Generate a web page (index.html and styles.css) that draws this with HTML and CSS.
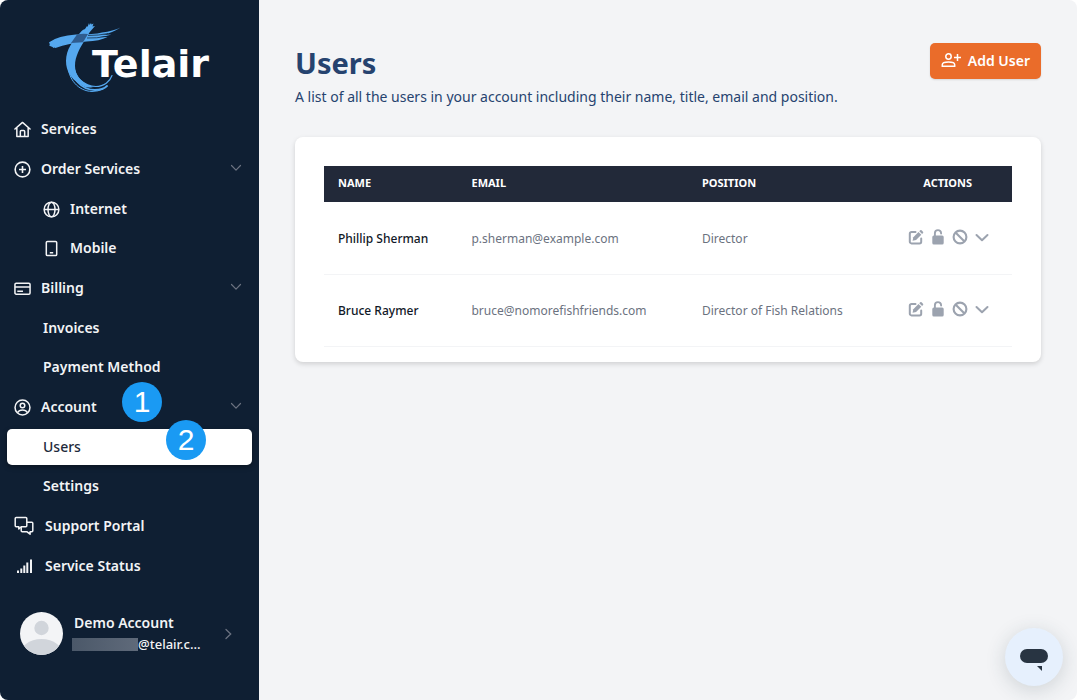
FILE: index.html
```html
<!DOCTYPE html>
<html lang="en">
<head>
<meta charset="utf-8">
<meta name="viewport" content="width=device-width, initial-scale=1">
<title>Users - Telair</title>
<link rel="stylesheet" href="styles.css">
</head>
<body>
<svg class="sprite" aria-hidden="true">
  <symbol id="i-down" viewBox="0 0 12 12"><path d="M1.500 2.500 6 7.200l4.500-4.700" fill="none" stroke="currentColor" stroke-width="1.200" stroke-linecap="round" stroke-linejoin="round"/></symbol>
  <symbol id="i-edit" viewBox="0 0 16 16"><path d="M7.500 3H3.500A1.700 1.700 0 0 0 1.800 4.700v8A1.700 1.700 0 0 0 3.500 14.400h8a1.700 1.700 0 0 0 1.700-1.700V9.500" fill="none" stroke="currentColor" stroke-width="2" stroke-linecap="round"/><path d="M5.300 8.200 10.500 3 13.300 5.800 8.100 11l-3.500.8z" fill="currentColor"/><path d="m11.300 2.200.9-.9q.7-.6 1.400 0l1.400 1.400q.6.700 0 1.400l-.9.900z" fill="currentColor"/></symbol>
  <symbol id="i-lock" viewBox="0 0 16 16"><rect x="2.300" y="6.600" width="11.400" height="8.900" rx="1.500" fill="currentColor"/><path d="M4.900 7V4.200a3.100 3.100 0 0 1 6.200 0v.3" fill="none" stroke="currentColor" stroke-width="1.900" stroke-linecap="round"/></symbol>
  <symbol id="i-ban" viewBox="0 0 16 16"><g fill="none" stroke="currentColor" stroke-width="2.100"><circle cx="8" cy="8" r="6.400"/><path d="m3.500 3.500 9 9"/></g></symbol>
  <symbol id="i-more" viewBox="0 0 16 16"><path d="m2.500 6 5.500 5.300L13.500 6" fill="none" stroke="currentColor" stroke-width="2" stroke-linecap="round" stroke-linejoin="round"/></symbol>
</svg>
<div class="app">
  <aside class="sidebar">
    <a class="logo" href="#" aria-label="Telair">
      <svg width="164" height="74" viewBox="46 20 164 74">
        <g fill="#55a8ef">
          <path d="M85 29l2-3 .5 1 1.500-4 .5 2 1.500-2 .5 1.500 2-1-1 3 2.500-.5Q90 31 86 38c-6 10-11 18-11 28 0 9 6 17 18 21q-7 2-13-3c-9-5-14-13-14-23 0-12 7-20 13-27 3-3 3-4 6-5z"/>
          <path d="M50 46l-1-1 1-.5-1-2 1-.8Q58 36 76 34.500q18 0 26-2 11-1.500 18.500-5-9 6-19 7.500l10-.5q-5 2-12 2.200l8 .2q-8 4-21 4.600-18 1.500-31 6.500l-1-.5-1 .5-1-1z"/>
        </g>
        <path d="M77 34.500q6-1.500 11-.4l-5 8.200-12 .6z" fill="#2f5c8f"/>
        <g fill="none" stroke="#55a8ef" stroke-linecap="round">
          <path d="M74 65c0 12 10 21.500 22 21.500 8 0 14-5 16-11" stroke-width="1.200"/>
          <path d="M71 64c0 14 10 26 24 26 5 0 9-1 12-4" stroke-width="1.800"/>
          <path d="M68 65c0 14 10 26 24 26.500q6 0 11-2.500" stroke-width="1"/>
        </g>
        <path d="M88 35.500q11 0 20-2M87 38q10 .3 19-1.500" fill="none" stroke="#0f1f33" stroke-width=".7"/>
        <text class="logo-text" x="92" y="77">Telair</text>
      </svg>
    </a>
    <nav class="nav" aria-label="Main">
      <ul class="menu">
        <li><a class="item" href="#">
          <svg width="17" height="17" viewBox="0 0 18 18" fill="none" stroke="currentColor" stroke-width="1.600" stroke-linejoin="round" stroke-linecap="round"><path d="M1 8.500 9 1.500l8 7M3 7v9.500h12V7M6.700 16.300v-5.300q0-1 1-1h2.600q1 0 1 1v5.300"/></svg>
          <span>Services</span></a></li>
        <li><a class="item" href="#">
          <svg width="17" height="17" viewBox="0 0 18 18" fill="none" stroke="currentColor" stroke-width="1.700"><circle cx="9" cy="9" r="7.800"/><path d="M9 5.300v7.400M5.300 9h7.400"/></svg>
          <span>Order Services</span><svg class="chev" width="12" height="12"><use href="#i-down"/></svg></a>
          <ul class="submenu">
            <li><a class="item" href="#">
              <svg width="17" height="17" viewBox="0 0 18 18" fill="none" stroke="currentColor" stroke-width="1.600"><circle cx="9" cy="9" r="7.800"/><ellipse cx="9" cy="9" rx="3.700" ry="7.800"/><path d="M1.200 9h15.600"/></svg>
              <span>Internet</span></a></li>
            <li><a class="item" href="#">
              <svg width="17" height="17" viewBox="0 0 18 18" fill="none" stroke="currentColor" stroke-width="1.600"><rect x="3.500" y="1.500" width="11" height="15" rx="1.200"/><path d="M7.200 13.500h3.600"/></svg>
              <span>Mobile</span></a></li>
          </ul></li>
        <li><a class="item" href="#">
          <svg width="17" height="17" viewBox="0 0 18 18" fill="none" stroke="currentColor" stroke-width="1.600"><rect x="1" y="3.500" width="16" height="11.500" rx="1.300"/><path d="M1 7.500h16M3.500 12h6"/></svg>
          <span>Billing</span><svg class="chev" width="12" height="12"><use href="#i-down"/></svg></a>
          <ul class="submenu">
            <li><a class="item" href="#">Invoices</a></li>
            <li><a class="item" href="#">Payment Method</a></li>
          </ul></li>
        <li><a class="item" href="#">
          <svg width="17" height="17" viewBox="0 0 18 18" fill="none" stroke="currentColor" stroke-width="1.600"><circle cx="9" cy="9" r="7.900"/><circle cx="9" cy="6.800" r="2.400"/><path d="M3.700 14.500q1.700-2.900 5.300-2.900t5.300 2.900"/></svg>
          <span>Account</span><svg class="chev" width="12" height="12"><use href="#i-down"/></svg><b class="step step-one">1</b></a>
          <ul class="submenu">
            <li><a class="item active" href="#" aria-current="page">Users<b class="step step-two">2</b></a></li>
            <li><a class="item" href="#">Settings</a></li>
          </ul></li>
        <li><a class="item wide" href="#">
          <svg width="20" height="20" viewBox="0 0 20 20" fill="none" stroke="currentColor" stroke-width="1.500" stroke-linejoin="round"><path d="M2.200 1.500h9.600q1 0 1 1v7.300q0 1-1 1H7.300L4.800 13v-2.200H2.200q-1 0-1-1V2.500q0-1 1-1z"/><path d="M12.800 6.300h5q1 0 1 1v7.500q0 1-1 1h-1.700v2.400l-3-2.400H8.200q-1 0-1-1v-4"/></svg>
          <span>Support Portal</span></a></li>
        <li><a class="item wide" href="#">
          <svg width="20" height="20" viewBox="0 0 20 20" fill="currentColor"><path d="M3 14.500h2V17H3zM6.300 12.500h2V17h-2zM9.300 9.500h2V17h-2zM12.300 6.500h2V17h-2zM16 3.500h2V17h-2z"/></svg>
          <span>Service Status</span></a></li>
      </ul>
    </nav>
    <a class="profile" href="#">
      <svg width="43" height="43" viewBox="0 0 43 43"><defs><clipPath id="face"><circle cx="21.500" cy="21.500" r="21.500"/></clipPath></defs><g clip-path="url(#face)"><path d="M0 0h43v43H0z" fill="#f3f4f6"/><circle cx="21.500" cy="16" r="7.200" fill="#d1d5db"/><ellipse cx="21.500" cy="44" rx="22" ry="17" fill="#d1d5db"/></g></svg>
      <span class="who"><strong>Demo Account</strong><span class="mail"><i class="mask"></i>@telair.c...</span></span>
      <svg class="next" width="12" height="14" viewBox="0 0 12 14" fill="none" stroke="currentColor" stroke-linecap="round" stroke-width="1.300"><path d="m4 2.500 4.700 4.500-4.700 4.500"/></svg>
    </a>
  </aside>
  <main class="main">
    <header class="head">
      <div><h1>Users</h1><p>A list of all the users in your account including their name, title, email and position.</p></div>
      <button class="add" type="button">
        <svg width="20" height="18" viewBox="0 0 20 18" fill="none" stroke="currentColor" stroke-width="1.500"><circle cx="7.500" cy="4.500" r="2.700"/><path d="M1.300 14.200v-1.500q0-2.700 6.200-2.700t6.200 2.700v1.500zM16.500 2v7M13 5.500h7"/></svg>
        Add User</button>
    </header>
    <section class="card">
      <table class="users">
        <colgroup><col class="c-name"><col class="c-email"><col class="c-pos"><col class="c-act"></colgroup>
        <thead><tr><th scope="col">NAME</th><th scope="col">EMAIL</th><th scope="col">POSITION</th><th scope="col" class="actions">ACTIONS</th></tr></thead>
        <tbody>
          <tr><td class="name">Phillip Sherman</td><td>p.sherman@example.com</td><td>Director</td>
            <td class="actions"><div class="tools"><button type="button" aria-label="Edit"><svg><use href="#i-edit"/></svg></button><button type="button" aria-label="Unlock"><svg><use href="#i-lock"/></svg></button><button type="button" aria-label="Disable"><svg><use href="#i-ban"/></svg></button><button type="button" aria-label="More"><svg><use href="#i-more"/></svg></button></div></td></tr>
          <tr><td class="name">Bruce Raymer</td><td>bruce@nomorefishfriends.com</td><td>Director of Fish Relations</td>
            <td class="actions"><div class="tools"><button type="button" aria-label="Edit"><svg><use href="#i-edit"/></svg></button><button type="button" aria-label="Unlock"><svg><use href="#i-lock"/></svg></button><button type="button" aria-label="Disable"><svg><use href="#i-ban"/></svg></button><button type="button" aria-label="More"><svg><use href="#i-more"/></svg></button></div></td></tr>
        </tbody>
      </table>
    </section>
  </main>
</div>
<button class="chat" type="button" aria-label="Chat">
  <svg width="30" height="24" viewBox="0 0 30 24" fill="#283442"><rect x="1" y="1" width="28" height="14" rx="7"/><path d="M18 18h5v5z"/></svg>
</button>
</body>
</html>
```
FILE: styles.css
```css
* { box-sizing: border-box; }
body {
  margin: 0;
  background: #fff;
  font-family: "Noto Sans", sans-serif;
  font-size: 14px;
  line-height: 20px;
}
ul { list-style: none; margin: 0; padding: 0; }
a { color: inherit; text-decoration: none; }
button { border: 0; padding: 0; font: inherit; cursor: pointer; }
svg { display: block; flex: none; }
.sprite { position: absolute; width: 0; height: 0; }

.app { display: flex; min-height: 100vh; background: #f3f4f6; border-radius: 8px; overflow: hidden; }

.sidebar {
  flex: none;
  width: 259px;
  padding: 20px 7px 0;
  background: #0f1f33;
  color: #f3f4f6;
}
.logo { display: block; padding-left: 39px; margin-bottom: 17px; }
.logo-text {
  font: bold 38px "DejaVu Sans", sans-serif;
  fill: #fff;
}
.menu { display: grid; gap: 4px; }
.submenu { display: grid; gap: 3px; margin-top: 4px; }
.item {
  position: relative;
  display: flex;
  align-items: center;
  gap: 10px;
  height: 36px;
  padding: 0 10px 0 7px;
  border-radius: 5px;
  font-weight: 600;
}
.item.wide { gap: 11px; }
.submenu .item { padding-left: 36px; }
.chev { margin-left: auto; color: #6b7280; }
.submenu .active { background: #fff; color: #1e2a3b; font-weight: 500; box-shadow: 0 2px 5px rgba(0, 0, 0, .35); }

.step {
  position: absolute;
  z-index: 1;
  width: 40px;
  height: 40px;
  border-radius: 50%;
  background: #1a9af3;
  color: #fff;
  font: 30px/40px "Liberation Sans", sans-serif;
  text-align: center;
}
.step-one { left: 115px; top: -7px; }
.step-two { left: 159px; top: -9px; }

.profile { display: flex; align-items: center; gap: 9px; margin: 28px 18px 0 13px; }
.who { display: grid; gap: 1px; }
.who strong { padding-left: 2px; font-weight: 600; }
.mail { display: flex; align-items: center; font-size: 13px; font-weight: 500; }
.mask { width: 66px; height: 13px; background: linear-gradient(90deg, #4b5869, #5f6a7a); }
.next { margin-left: auto; color: #6b7280; }

.main { flex: 1; min-width: 0; padding: 43px 36px 36px; }
.head { display: flex; justify-content: space-between; align-items: flex-start; gap: 20px; color: #26436f; }
h1 { margin: 0; font-size: 29px; line-height: 40px; font-weight: 700; }
.head p { margin: 4px 0 0; font-weight: 450; }
.add {
  display: flex;
  align-items: center;
  gap: 7px;
  flex: none;
  height: 36px;
  padding: 0 11px;
  border-radius: 5px;
  background: #ea6c2a;
  color: #fff;
  font-weight: 600;
  box-shadow: 0 1px 2px rgba(0, 0, 0, .12);
}
.card {
  margin-top: 30px;
  padding: 29px 29px 15px;
  background: #fff;
  border-radius: 8px;
  box-shadow: 0 2px 5px rgba(0, 0, 0, .15);
}
.users { width: 100%; border-collapse: collapse; table-layout: fixed; font-size: 12px; }
.c-name { width: 19.400%; }
.c-email { width: 33.500%; }
.c-pos { width: 28.400%; }
.users th {
  height: 36px;
  padding: 0 14px 2px;
  background: #222939;
  color: #fff;
  font-size: 11px;
  font-weight: 700;
  text-align: left;
}
.users th.actions { text-align: center; }
.users td { height: 72px; padding: 2px 14px 0; border-bottom: 1px solid #f3f4f6; color: #6b7280; }
.users td.actions { padding: 0 14px 2px; }
.users .name { color: #111827; font-weight: 500; }
.tools { display: flex; justify-content: center; gap: 6px; padding-left: 2px; }
.tools button { background: none; color: #9ca3af; }
.tools svg { width: 16px; height: 16px; }

.chat {
  position: fixed;
  right: 14px;
  bottom: 14px;
  display: grid;
  place-items: center;
  width: 58px;
  height: 58px;
  padding-top: 5px;
  border-radius: 50%;
  background: #e6f0fd;
  box-shadow: 0 4px 20px rgba(40, 60, 70, .18);
}
```
